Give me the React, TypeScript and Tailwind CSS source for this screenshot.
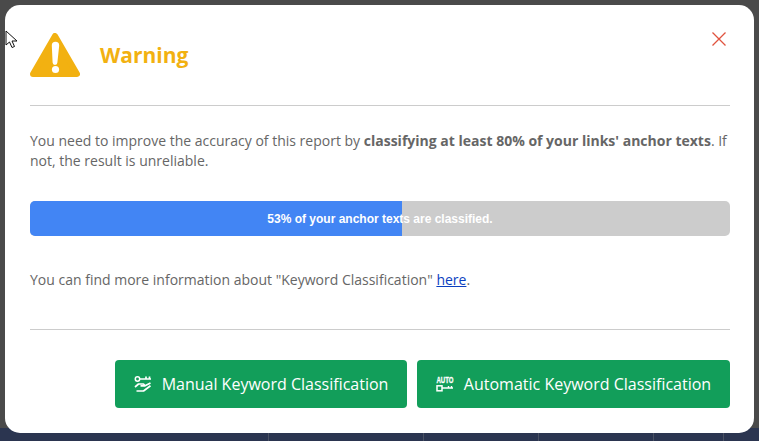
import React from 'react';

function WarningIcon() {
	return (
		<svg width="50" height="44" viewBox="0 0 50 44" className="shrink-0">
			<path d="M25 3 L47 41 L3 41 Z" fill="#f2b111" stroke="#f2b111" strokeWidth="6" strokeLinejoin="round" />
			<path d="M21.8 12.5 a3.7 3.7 0 0 1 7.4 0 L27.4 29.5 a2.4 2.4 0 0 1 -4.8 0 Z" fill="#fff" />
			<circle cx="25.5" cy="36.5" r="3.6" fill="#fff" />
		</svg>
	);
}

function ManualKeyIcon() {
	return (
		<svg width="18" height="16" viewBox="0 0 18 16" fill="none" stroke="#fff" className="shrink-0">
			<circle cx="3.5" cy="3" r="2.2" strokeWidth="1.5" />
			<path d="M5.5 3 H17 M12 3 V0.5 M15.5 3 V0.5" strokeWidth="1.7" />
			<path d="M1 11 L4.5 8 H9.5 L11 9.8 H6.5 M11 9.8 L16.5 7 M2.5 15 H9.5 L16.5 9.8" strokeWidth="1.7" strokeLinejoin="round" />
		</svg>
	);
}

function AutoKeyIcon() {
	return (
		<svg width="18" height="16" viewBox="0 0 18 16" fill="none" className="shrink-0 overflow-visible">
			<text x="9" y="7" textAnchor="middle" fill="#fff" stroke="#fff" strokeWidth="0.3" fontSize="8.5" fontWeight="700" fontFamily="'Liberation Sans', sans-serif" textLength="17" lengthAdjust="spacingAndGlyphs">AUTO</text>
			<rect x="1" y="9.8" width="5" height="5" stroke="#fff" strokeWidth="1.5" />
			<path d="M6 12 H17 M12.5 12 V10 M15.5 12 V10" stroke="#fff" strokeWidth="1.4" />
		</svg>
	);
}

const Cursor = () => (
	<svg width="14" height="20" viewBox="0 0 14 20" className="absolute left-[5px] top-[30px] z-20">
		<path d="M1 1 L1 15 L4.5 12 L7 17.5 L9.5 16.5 L7 11 L12 11 Z" fill="#fff" stroke="#111" strokeWidth="1" />
	</svg>
);

export default function App() {
	return (
		<div className="relative h-[441px] w-[759px] overflow-hidden bg-[#4a4a4a] pt-[5px] font-['Open_Sans',sans-serif]">
			<Cursor />
			<div className="absolute inset-x-0 bottom-0 flex h-[13px] bg-[#2b3550]">
				<div className="w-[269px] border-r border-[#4a5163]" />
				<div className="w-[155px] border-r border-[#4a5163]" />
				<div className="w-[115px] border-r border-[#4a5163]" />
				<div className="w-[115px] border-r border-[#4a5163]" />
				<div className="w-[70px] border-r border-[#4a5163]" />
			</div>
			<div className="relative z-10 mx-[5px] h-[428px] rounded-[15px] bg-white pl-[25px] pr-[24px]">
				<div className="flex h-[101px] items-center gap-[20px] border-b border-[#cccccc]">
					<WarningIcon />
					<h2 className="text-[21px] leading-none font-bold text-[#f2b111]">Warning</h2>
					<button className="absolute right-[28px] top-[27px]">
						<svg width="14" height="14" viewBox="0 0 14 14" stroke="#e0533f" strokeWidth="1.3" fill="none" className="block">
							<path d="M0.5 0.5 L13.5 13.5 M13.5 0.5 L0.5 13.5" />
						</svg>
					</button>
				</div>
				<p className="mt-[25px] text-[14px] leading-[20px] text-[#666666]">
					You need to improve the accuracy of this report by <b className="font-bold">classifying at least 80% of your links' anchor texts</b>. If not, the result is unreliable.
				</p>
				<div className="relative mt-[30px] flex h-[35px] overflow-hidden rounded-[5px] bg-[#cccccc]">
					<div className="h-full w-[372px] bg-[#4285f4]" />
					<span className="absolute inset-0 flex items-center justify-center font-['Liberation_Sans',sans-serif] text-[12px] font-bold text-white">
						53% of your anchor texts are classified.
					</span>
				</div>
				<p className="mt-[34px] text-[14px] leading-[20px] text-[#666666]">
					You can find more information about "Keyword Classification" <a className="text-[#0b3fbf] underline">here</a>.
				</p>
				<div className="mt-[39px] flex justify-end gap-[10px] border-t border-[#cccccc] pt-[30px]">
					<button className="flex h-[48px] w-[292px] items-center justify-center gap-[10px] rounded-[4px] bg-[#129e5a] text-[16px] text-white">
						<ManualKeyIcon />
						Manual Keyword Classification
					</button>
					<button className="flex h-[48px] w-[313px] items-center justify-center gap-[10px] rounded-[4px] bg-[#129e5a] text-[16px] text-white">
						<AutoKeyIcon />
						Automatic Keyword Classification
					</button>
				</div>
			</div>
		</div>
	);
}
